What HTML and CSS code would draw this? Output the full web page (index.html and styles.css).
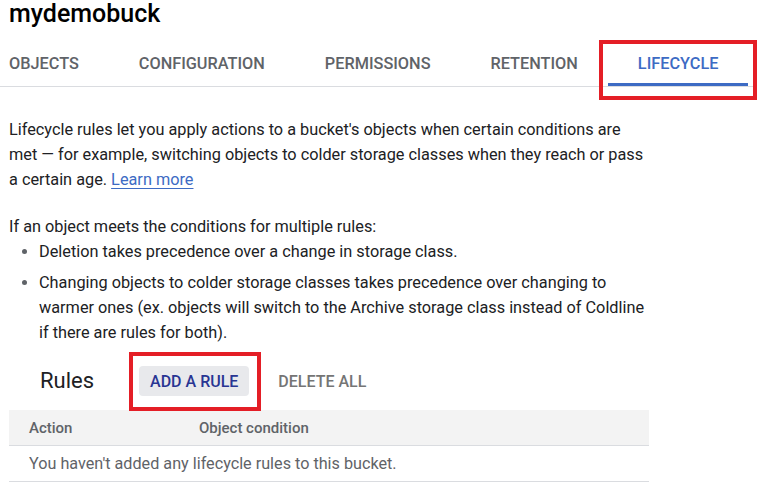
FILE: index.html
```html
<!DOCTYPE html>
<html>
<head>
<meta charset="utf-8">
<link rel="stylesheet" href="styles.css">
</head>
<body>
<div class="page">
  <h1 class="title">mydemobuck</h1>
  <nav class="tabs">
    <div class="tab tab-first">OBJECTS</div>
    <div class="tab">CONFIGURATION</div>
    <div class="tab">PERMISSIONS</div>
    <div class="tab">RETENTION</div>
    <div class="tab tab-active">LIFECYCLE<span class="annot annot-tab"></span></div>
  </nav>
  <div class="content">
    <p class="intro">Lifecycle rules let you apply actions to a bucket's objects when certain conditions are met — for example, switching objects to colder storage classes when they reach or pass a certain age. <a class="link" href="#">Learn more</a></p>
    <p class="lead">If an object meets the conditions for multiple rules:</p>
    <ul class="bullets">
      <li>Deletion takes precedence over a change in storage class.</li>
      <li>Changing objects to colder storage classes takes precedence over changing to warmer ones (ex. objects will switch to the Archive storage class instead of Coldline if there are rules for both).</li>
    </ul>
    <div class="rules-bar">
      <h2 class="rules-title">Rules</h2>
      <div class="btn-wrap">
        <button class="btn btn-primary">ADD A RULE</button>
        <span class="annot annot-btn"></span>
      </div>
      <button class="btn btn-muted">DELETE ALL</button>
    </div>
    <div class="table">
      <div class="thead">
        <div class="col-action">Action</div>
        <div class="col-cond">Object condition</div>
      </div>
      <div class="trow">You haven't added any lifecycle rules to this bucket.</div>
    </div>
  </div>
</div>
</body>
</html>
```

FILE: styles.css
```css
html, body {
  margin: 0;
  padding: 0;
  background: #ffffff;
}
body {
  font-family: Roboto, "Liberation Sans", sans-serif;
  color: #202124;
  width: 757px;
  height: 495px;
  overflow: hidden;
}
.page {
  position: relative;
}
.title {
  margin: 0;
  padding-left: 9px;
  font-size: 25px;
  line-height: 28px;
  font-weight: 500;
  color: #000;
  height: 40px;
  box-sizing: border-box;
}
.tabs {
  display: flex;
  height: 46px;
  border-bottom: 1px solid #dadce0;
  padding-left: 9px;
}
.tab {
  position: relative;
  padding: 0 30px;
  font-size: 16.3px;
  font-weight: 500;
  color: #5f6368;
  display: flex;
  align-items: center;
  box-sizing: border-box;
  height: 46px;
  border-bottom: 3px solid transparent;
  padding-top: 3px;
}
.tab-first {
  padding-left: 0;
}
.tab-active {
  color: #3d6bc4;
  border-bottom-color: #3d6bc4;
}
.annot {
  position: absolute;
  border: 4px solid #e41e26;
  box-sizing: border-box;
  pointer-events: none;
}
.annot-tab {
  left: -9px;
  top: 0;
  width: 158px;
  height: 60px;
}
.content {
  margin-left: 9px;
  width: 640px;
}
.intro {
  margin: 30px 0 0;
  font-size: 16.3px;
  line-height: 25px;
}
.link {
  color: #3d6bc4;
  text-decoration: underline;
  text-underline-offset: 3px;
}
.lead {
  margin: 22px 0 0;
  font-size: 16.3px;
  line-height: 25px;
}
.bullets {
  margin: 0;
  padding-left: 30px;
  font-size: 16.3px;
  line-height: 25px;
}
.bullets li {
  margin-bottom: 6px;
}
.bullets li::marker {
  color: #5f6368;
}
.rules-bar {
  display: flex;
  align-items: center;
  margin-top: 21px;
  padding-left: 31px;
  height: 30px;
}
.rules-title {
  margin: 0 45px 0 0;
  font-size: 22px;
  font-weight: 400;
  color: #202124;
  line-height: 30px;
}
.btn-wrap {
  position: relative;
}
.btn {
  display: block;
  font-family: Roboto, "Liberation Sans", sans-serif;
  font-size: 16px;
  font-weight: 500;
  height: 30px;
  padding: 0 11px;
  border: none;
  border-radius: 4px;
  background: transparent;
  cursor: pointer;
}
.btn-primary {
  background: #e8e9ec;
  color: #283593;
}
.btn-muted {
  color: #757575;
  margin-left: 18px;
}
.annot-btn {
  left: -10px;
  top: -14px;
  width: 132px;
  height: 59px;
}
.table {
  margin-top: 14px;
  width: 640px;
  font-size: 15px;
  color: #5f6368;
}
.thead {
  display: flex;
  align-items: center;
  height: 35px;
  background: #f3f3f3;
  border-bottom: 1px solid #dadce0;
  font-weight: 500;
  padding-left: 20px;
}
.col-action {
  width: 170px;
}
.trow {
  height: 35px;
  display: flex;
  align-items: center;
  padding-left: 20px;
  font-size: 16.2px;
  border-bottom: 1px solid #dadce0;
}
```
